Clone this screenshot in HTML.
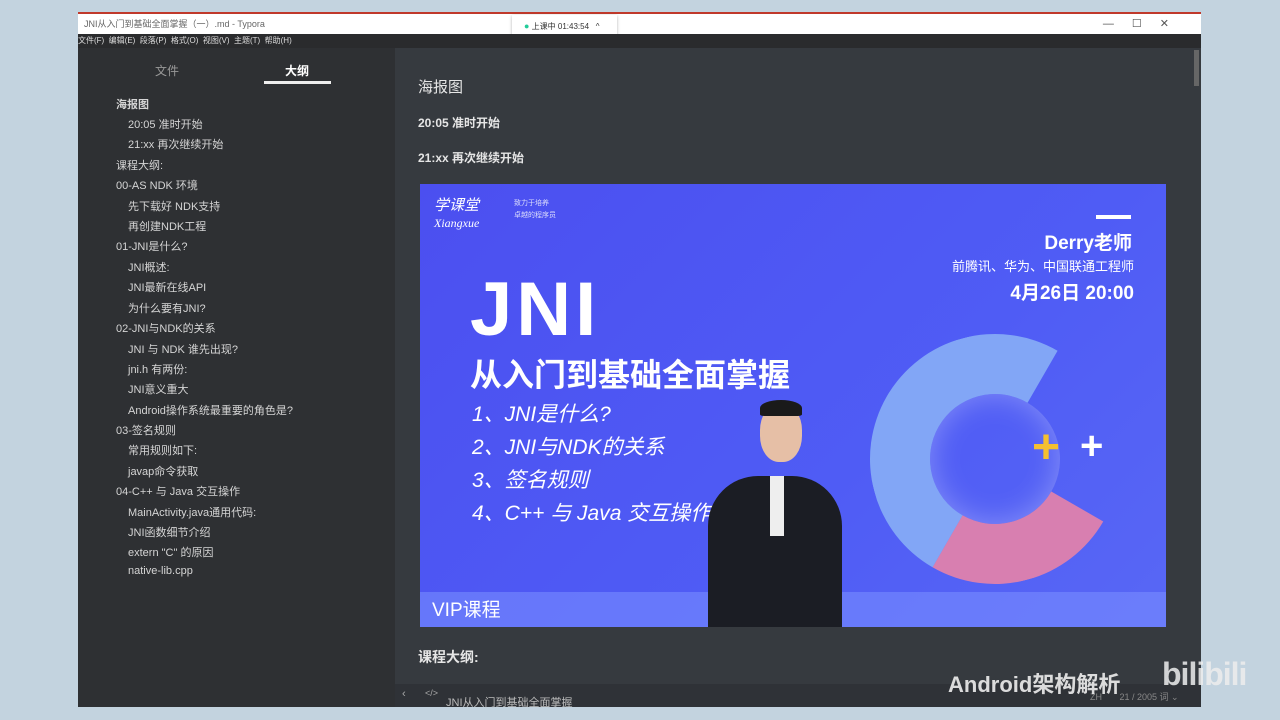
<!DOCTYPE html>
<html><head><meta charset="utf-8"><style>
*{margin:0;padding:0;box-sizing:border-box}
body{width:1280px;height:720px;background:#c3d3df;position:relative;overflow:hidden;font-family:"Liberation Sans","Noto Sans CJK SC",sans-serif}
.win{position:absolute;left:78px;top:12px;width:1123px;height:695px;background:#363a3f}
.top{position:absolute;left:0;top:0;width:1123px;height:2px;background:#c0392b}
.title{position:absolute;left:0;top:2px;width:1123px;height:20px;background:#fff;font-size:9px;color:#666;line-height:20px;padding-left:6px}
.menu{position:absolute;left:0;top:22px;width:1123px;height:14px;background:#2a2b2d;color:#ddd;font-size:8px;line-height:14px}
.side{position:absolute;left:0;top:36px;width:317px;height:659px;background:#2e3033}
.it{position:absolute;color:#d5d5d5;font-size:11px;white-space:nowrap}
.main{position:absolute;left:317px;top:36px;width:806px;height:659px;background:#363a3f}
.txt{position:absolute;color:#e6e6e6;font-weight:bold;font-size:12px;white-space:nowrap}
.ban{position:absolute;left:420px;top:184px;width:746px;height:443px;background:linear-gradient(135deg,#4b4ff0,#4f5cf5 60%,#5867f5);overflow:hidden}
.w{position:absolute;color:#fff;white-space:nowrap}
</style></head><body>
<div class="win">
<div class="top"></div>
<div class="title">JNI从入门到基础全面掌握（一）.md - Typora<span style="position:absolute;right:14px;top:0;color:#555;font-size:11px;letter-spacing:18px">—☐✕</span></div>
<div style="position:absolute;left:434px;top:3px;width:105px;height:22px;background:#fff;box-shadow:0 1px 3px rgba(0,0,0,.3);font-size:8px;line-height:22px;color:#333;padding-left:12px"><span style="color:#2c9;font-size:9px">●</span> 上课中 01:43:54 &nbsp;&nbsp;^</div>
<div class="menu">文件(F) &nbsp;编辑(E) &nbsp;段落(P) &nbsp;格式(O) &nbsp;视图(V) &nbsp;主题(T) &nbsp;帮助(H)</div>
<div class="side">
<div class="it" style="left:77px;top:14px;color:#999;font-size:12px">文件</div>
<div class="it" style="left:207px;top:14px;font-weight:bold;color:#fff;font-size:12px">大纲</div>
<div style="position:absolute;left:186px;top:33px;width:67px;height:3px;background:#eee"></div>
</div>
<div class="main"></div>
<div style="position:absolute;left:1116px;top:38px;width:5px;height:36px;background:#666"></div>
</div>
<div class="it" style="left:116px;top:96px;font-weight:bold">海报图</div>
<div class="it" style="left:128px;top:116px">20:05 准时开始</div>
<div class="it" style="left:128px;top:136px">21:xx 再次继续开始</div>
<div class="it" style="left:116px;top:157px">课程大纲:</div>
<div class="it" style="left:116px;top:177px">00-AS NDK 环境</div>
<div class="it" style="left:128px;top:198px">先下载好 NDK支持</div>
<div class="it" style="left:128px;top:218px">再创建NDK工程</div>
<div class="it" style="left:116px;top:238px">01-JNI是什么?</div>
<div class="it" style="left:128px;top:259px">JNI概述:</div>
<div class="it" style="left:128px;top:279px">JNI最新在线API</div>
<div class="it" style="left:128px;top:300px">为什么要有JNI?</div>
<div class="it" style="left:116px;top:320px">02-JNI与NDK的关系</div>
<div class="it" style="left:128px;top:341px">JNI 与 NDK 谁先出现?</div>
<div class="it" style="left:128px;top:361px">jni.h 有两份:</div>
<div class="it" style="left:128px;top:381px">JNI意义重大</div>
<div class="it" style="left:128px;top:402px">Android操作系统最重要的角色是?</div>
<div class="it" style="left:116px;top:422px">03-签名规则</div>
<div class="it" style="left:128px;top:442px">常用规则如下:</div>
<div class="it" style="left:128px;top:463px">javap命令获取</div>
<div class="it" style="left:116px;top:483px">04-C++ 与 Java 交互操作</div>
<div class="it" style="left:128px;top:504px">MainActivity.java通用代码:</div>
<div class="it" style="left:128px;top:524px">JNI函数细节介绍</div>
<div class="it" style="left:128px;top:544px">extern "C" 的原因</div>
<div class="it" style="left:128px;top:565px">native-lib.cpp</div>

<div class="txt" style="left:418px;top:76px;font-size:15px;font-weight:normal">海报图</div>
<div class="txt" style="left:418px;top:114px">20:05 准时开始</div>
<div class="txt" style="left:418px;top:149px">21:xx 再次继续开始</div>
<div class="txt" style="left:418px;top:647px;font-size:14px">课程大纲:</div>

<div class="ban">
<div class="w" style="left:14px;top:10px;font-size:15px;font-style:italic;font-family:'Liberation Serif','Noto Sans CJK SC',serif">学课堂<br><span style="font-size:12px">Xiangxue</span></div>
<div class="w" style="left:94px;top:14px;font-size:7px;line-height:12px;opacity:.8">致力于培养<br>卓越的程序员</div>
<div style="position:absolute;left:676px;top:31px;width:35px;height:4px;background:#fff"></div>
<div class="w" style="right:34px;top:44px;font-size:19px;font-weight:bold">Derry老师</div>
<div class="w" style="right:32px;top:72px;font-size:13px">前腾讯、华为、中国联通工程师</div>
<div class="w" style="right:32px;top:94px;font-size:19px;font-weight:bold">4月26日 20:00</div>
<div class="w" style="left:50px;top:86px;font-size:76px;font-weight:bold;letter-spacing:4px;line-height:80px">JNI</div>
<div class="w" style="left:50px;top:166px;font-size:32px;font-weight:bold">从入门到基础全面掌握</div>
<div class="w" style="left:52px;top:214px;font-size:21px;line-height:33px;font-style:italic">1、JNI是什么?<br>2、JNI与NDK的关系<br>3、签名规则<br>4、C++ 与 Java 交互操作</div>
<div style="position:absolute;left:450px;top:150px;width:250px;height:250px;border-radius:50%;border:60px solid #82a6f6;border-bottom-color:#d87fb0;border-right-color:transparent;transform:rotate(-15deg);box-shadow:inset 0 0 30px rgba(255,255,255,.3)"></div>
<div class="w" style="left:612px;top:236px;font-size:48px;font-weight:bold;color:#f5c030">+</div>
<div class="w" style="left:660px;top:240px;font-size:40px;font-weight:bold">+</div>
<div style="position:absolute;left:0;top:408px;width:746px;height:35px;background:rgba(120,140,255,.6)"></div>
<div class="w" style="left:12px;top:411px;font-size:19px">VIP课程</div>
<div style="position:absolute;left:288px;top:292px;width:134px;height:151px;background:#1b1d24;border-radius:50px 50px 0 0"></div>
<div style="position:absolute;left:350px;top:292px;width:14px;height:60px;background:#eee"></div>
<div style="position:absolute;left:340px;top:220px;width:42px;height:58px;background:#e6bfa6;border-radius:45%"></div>
<div style="position:absolute;left:340px;top:216px;width:42px;height:16px;background:#1a1a1a;border-radius:50% 50% 10% 10%"></div>
</div>

<div style="position:absolute;left:395px;top:684px;width:806px;height:23px;background:#2f3237"></div>
<div class="it" style="left:402px;top:688px;color:#aaa">‹</div>
<div class="it" style="left:425px;top:688px;color:#aaa;font-size:9px">&lt;/&gt;</div>
<div class="it" style="left:446px;top:694px;color:#bbb;font-size:11px">JNI从入门到基础全面掌握</div>
<div class="it" style="left:1090px;top:690px;color:#888;font-size:9px">ZH &nbsp;&nbsp;&nbsp;&nbsp;&nbsp; 21 / 2005 词 ⌄</div>
<div class="it" style="left:948px;top:667px;color:#eee;font-size:22px;font-weight:bold;opacity:.9">Android架构解析</div>
<div class="it" style="left:1162px;top:656px;color:#eee;font-size:32px;font-weight:bold;opacity:.85;letter-spacing:-1px">bilibili</div>
</body></html>
